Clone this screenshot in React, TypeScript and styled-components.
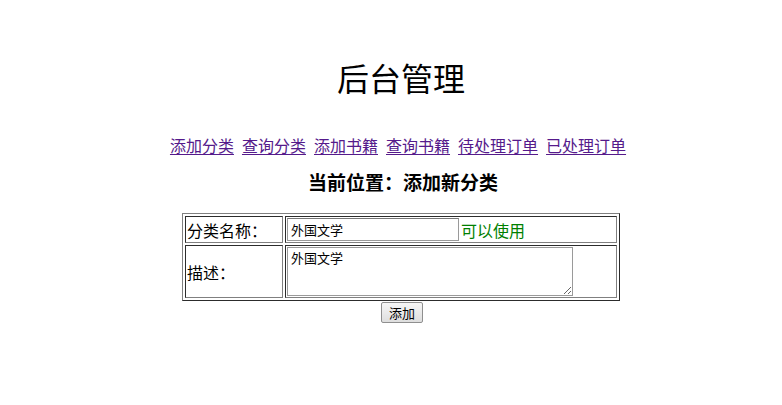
import styled, { createGlobalStyle } from 'styled-components';

const GlobalStyle = createGlobalStyle`
  html, body {
    margin: 0;
    background: #ffffff;
  }
  body {
    font-family: "Noto Sans CJK SC", "Noto Sans", sans-serif;
    color: #000000;
  }
`;

const navItems = ['添加分类', '查询分类', '添加书籍', '查询书籍', '待处理订单', '已处理订单'];

const App = () => {
  return (
    <>
      <GlobalStyle />
      <SPage>
        <STitle>后台管理</STitle>
        <SNav>
          {navItems.map((item) => (
            <SLink key={item} href="#">
              {item}
            </SLink>
          ))}
        </SNav>
        <SLocation>当前位置：添加新分类</SLocation>
        <form onSubmit={(e) => e.preventDefault()}>
          <STable>
            <tbody>
              <tr>
                <SLabelCell>分类名称：</SLabelCell>
                <SFieldCell>
                  <SNameRow>
                    <SInput type="text" defaultValue="外国文学" />
                    <SStatus>可以使用</SStatus>
                  </SNameRow>
                </SFieldCell>
              </tr>
              <tr>
                <SLabelCell>描述：</SLabelCell>
                <SFieldCell>
                  <STextarea defaultValue="外国文学" />
                </SFieldCell>
              </tr>
            </tbody>
          </STable>
          <SActions>
            <SButton type="submit">添加</SButton>
          </SActions>
        </form>
      </SPage>
    </>
  );
};

export default App;

const SPage = styled.div`
  display: flex;
  flex-direction: column;

  padding: 57px 0 40px 20px;
`;
const STitle = styled.h1`
  margin: 0;

  font-size: 32px;
  font-weight: 400;
  line-height: 40px;
  text-align: center;
`;
const SNav = styled.nav`
  display: flex;
  justify-content: center;
  gap: 8px;

  margin-top: 38px;
  padding-right: 6px;
`;
const SLink = styled.a`
  font-size: 16px;
  line-height: 20px;
  color: #551a8b;
  text-decoration: underline;
  text-underline-offset: 2px;
`;
const SLocation = styled.h3`
  margin: 15px 0 0;
  padding-left: 4px;

  font-size: 19px;
  font-weight: 700;
  line-height: 24px;
  text-align: center;
`;
const STable = styled.table`
  width: 438px;
  margin: 19px auto 0;

  border: 1px outset grey;
  border-collapse: separate;
  border-spacing: 2px;
`;
const SLabelCell = styled.td`
  width: 94px;
  padding: 1px;

  border: 1px inset grey;
  font-size: 16px;
  line-height: 20px;
  vertical-align: middle;
  white-space: nowrap;
`;
const SFieldCell = styled.td`
  padding: 1px;

  border: 1px inset grey;
  font-size: 16px;
  line-height: 20px;
  vertical-align: middle;
`;
const SNameRow = styled.div`
  display: flex;
  align-items: center;
  gap: 2px;

  height: 23px;
`;
const SInput = styled.input`
  box-sizing: border-box;
  width: 172px;
  height: 23px;
  margin: 0;
  padding: 0 3px;

  border: 1px solid #9a9a9a;
  border-top-color: #767676;
  font-family: "Noto Sans CJK SC", "Noto Sans", sans-serif;
  font-size: 13px;
  color: #000000;
`;
const SStatus = styled.span`
  font-size: 16px;
  line-height: 20px;
  color: #008000;
`;
const STextarea = styled.textarea`
  display: block;
  box-sizing: border-box;
  width: 286px;
  height: 49px;
  margin: 0;
  padding: 2px 3px;

  border: 1px solid #9a9a9a;
  font-family: "Noto Sans CJK SC", "Noto Sans", sans-serif;
  font-size: 13px;
  line-height: 16px;
  color: #000000;
`;
const SActions = styled.div`
  display: flex;
  justify-content: center;

  margin-top: 1px;
  padding-left: 2px;
`;
const SButton = styled.button`
  box-sizing: border-box;
  width: 42px;
  height: 21px;
  padding: 0;

  border: 1px solid #8f8f8f;
  border-radius: 2px;
  background: linear-gradient(#f6f6f6, #dedede);
  font-family: "Noto Sans CJK SC", "Noto Sans", sans-serif;
  font-size: 13px;
  line-height: 18px;
  color: #000000;
  cursor: pointer;
`;
